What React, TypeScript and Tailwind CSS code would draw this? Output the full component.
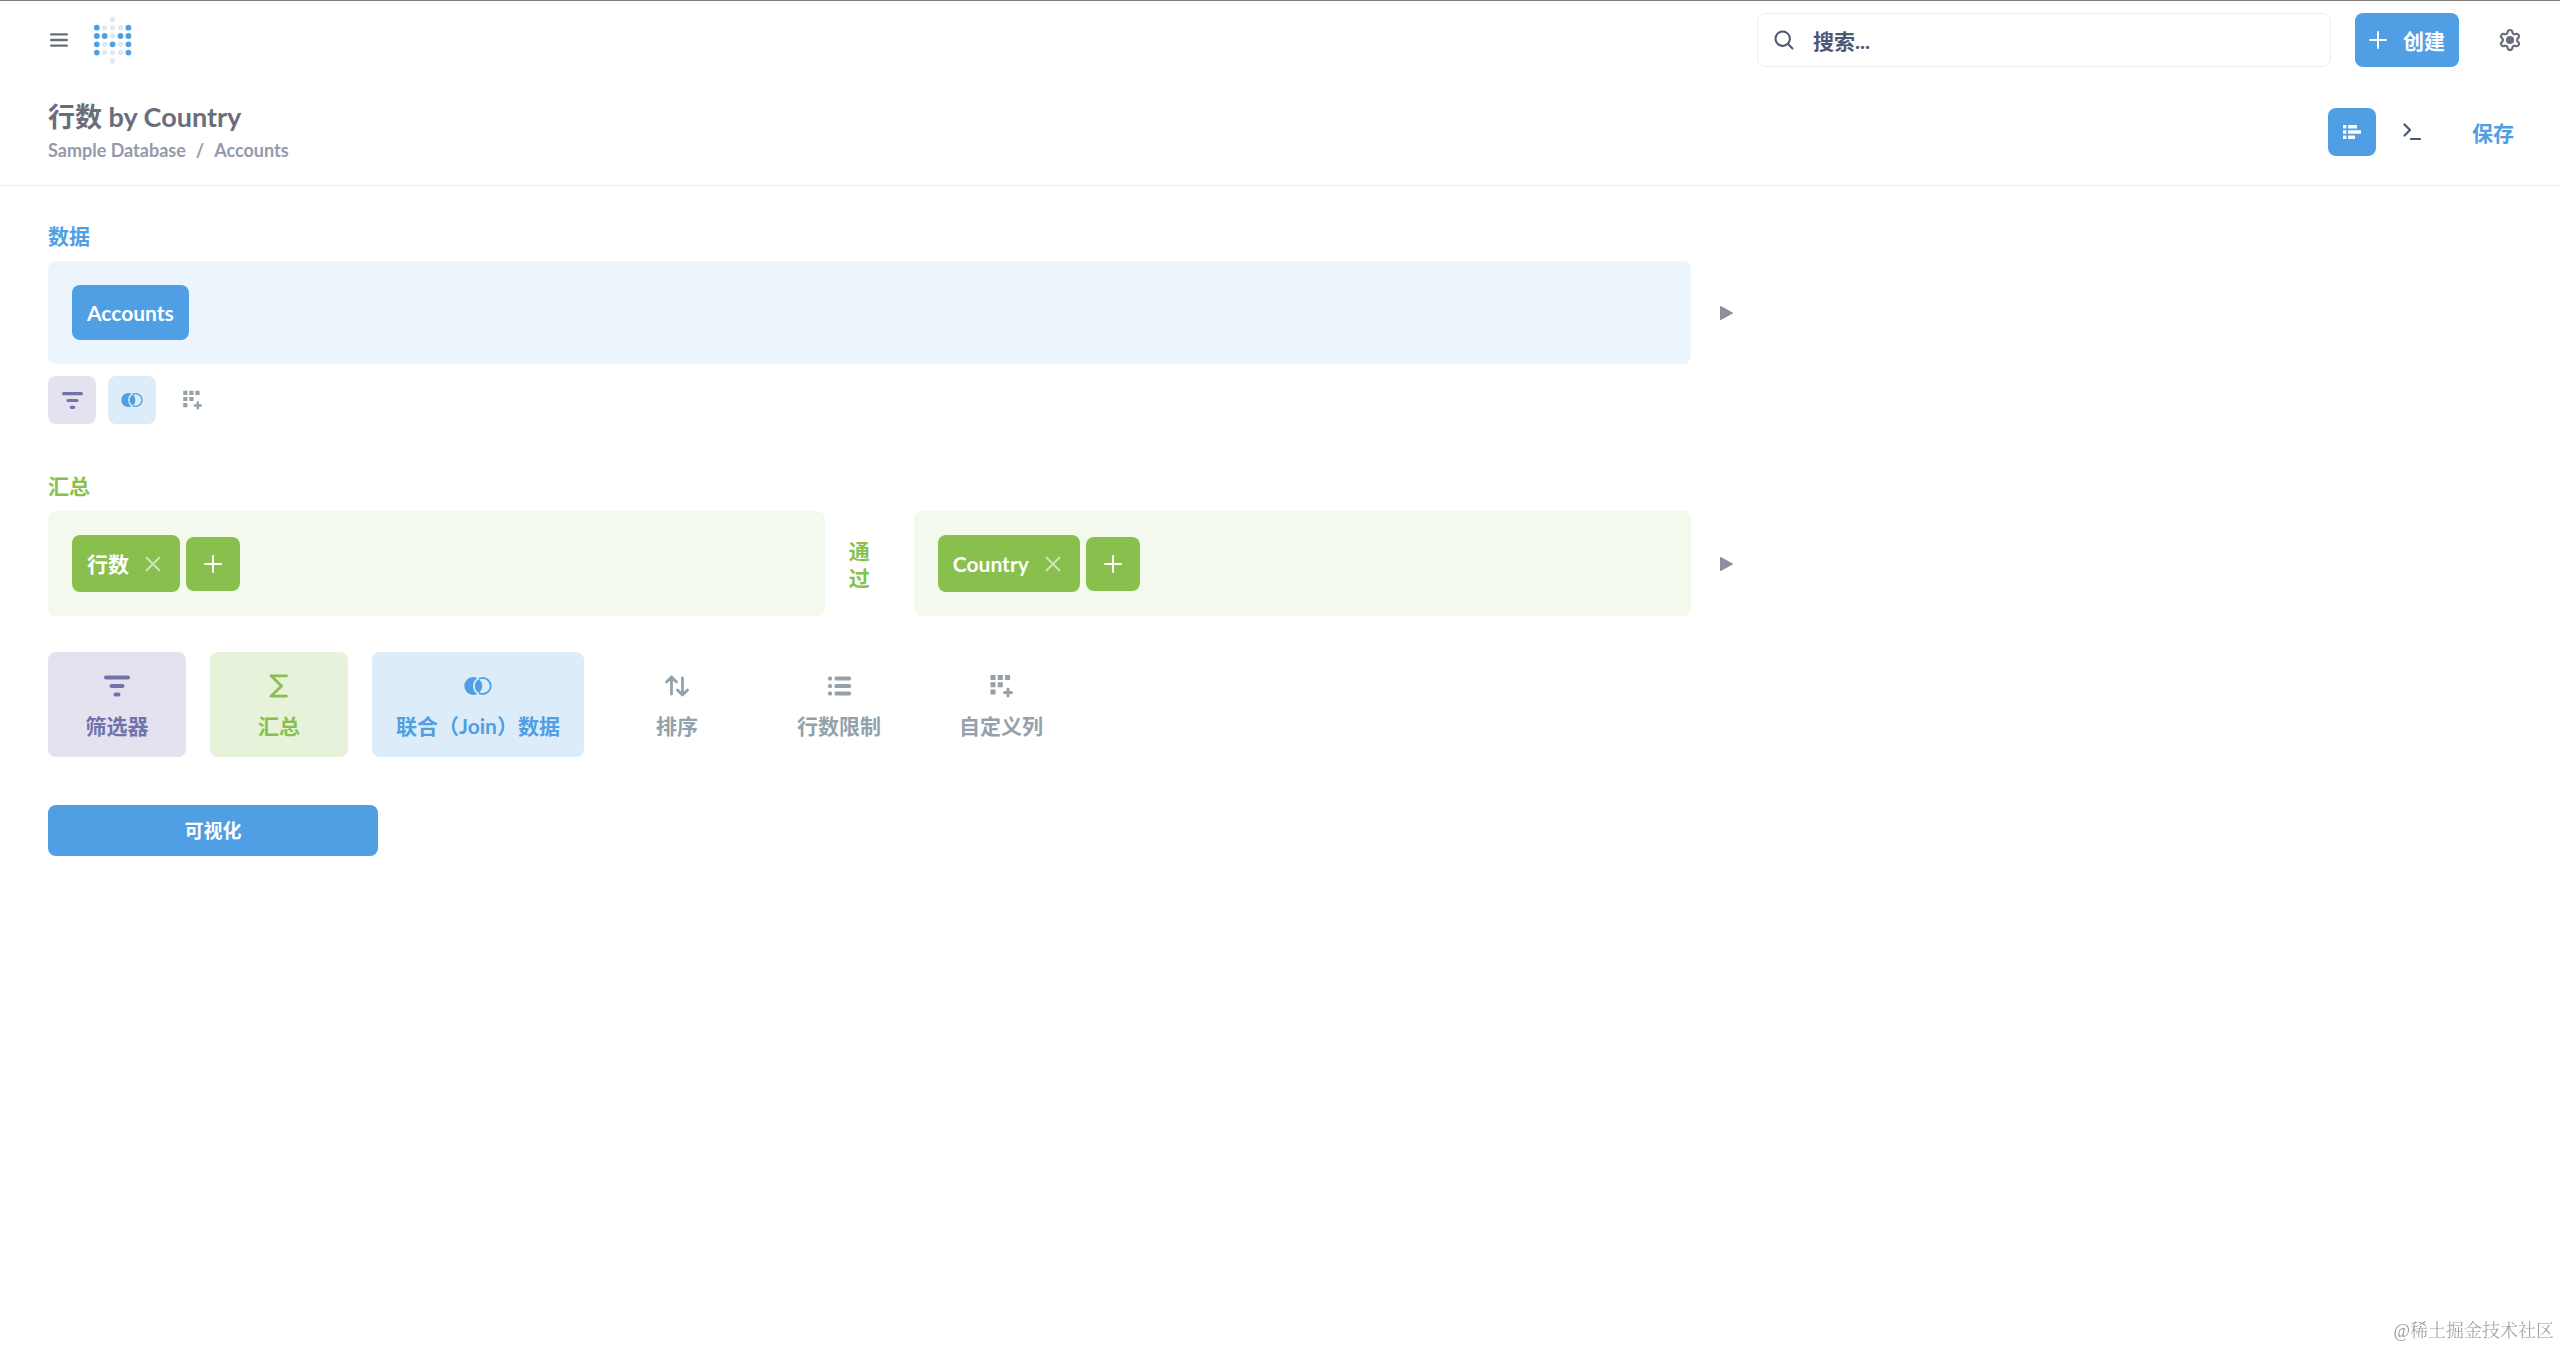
import React from 'react';
import { Settings } from 'lucide-react';

type IconProps = { className?: string };

const LOGO_ROWS = ['..o..', 'xooox', 'xxoxx', 'xoxox', 'xooox', '..o..'];

function Logo() {
  return (
    <svg viewBox="0 0 38 48" className="w-[38px] h-12" aria-hidden="true">
      {LOGO_ROWS.map((row, y) =>
        row.split('').map((dot, x) =>
          dot === '.' ? null : (
            <circle
              key={`${x}-${y}`}
              cx={2.8 + x * 7.9}
              cy={3.4 + y * 8.3}
              r={dot === 'x' ? 2.9 : 2.6}
              fill={dot === 'x' ? '#509ee3' : '#e1e7f3'}
            />
          )
        )
      )}
    </svg>
  );
}

function MenuIcon({ className }: IconProps) {
  return (
    <svg viewBox="0 0 20 16" className={className} stroke="currentColor" strokeWidth="2.4" strokeLinecap="round">
      <path d="M2.2 2.4h15.6M2.2 8h15.6M2.2 13.6h15.6" />
    </svg>
  );
}

function SearchIcon({ className }: IconProps) {
  return (
    <svg viewBox="0 0 20 20" className={className} fill="none" stroke="currentColor" strokeWidth="2" strokeLinecap="round">
      <circle cx="8.7" cy="8.7" r="7.2" />
      <path d="M14 14l4.5 4.5" />
    </svg>
  );
}

function PlusIcon({ className }: IconProps) {
  return (
    <svg viewBox="0 0 18 18" className={className} stroke="currentColor" strokeWidth="2" strokeLinecap="round">
      <path d="M9 1v16M1 9h16" />
    </svg>
  );
}

function CloseIcon({ className }: IconProps) {
  return (
    <svg viewBox="0 0 16 16" className={className} stroke="currentColor" strokeWidth="1.8" strokeLinecap="round">
      <path d="M1.5 1.5l13 13M14.5 1.5l-13 13" />
    </svg>
  );
}

function NotebookIcon({ className }: IconProps) {
  return (
    <svg viewBox="0 0 18 14" className={className} fill="currentColor">
      <rect x="0" y="0" width="3.4" height="3.4" rx=".6" />
      <rect x="5" y="0" width="9" height="3.4" rx=".6" />
      <rect x="0" y="5.2" width="3.4" height="3.6" rx=".6" />
      <rect x="5" y="5.2" width="13" height="3.6" rx=".6" />
      <rect x="0" y="10.6" width="3.4" height="3.4" rx=".6" />
      <rect x="5" y="10.6" width="7" height="3.4" rx=".6" />
    </svg>
  );
}

function TerminalIcon({ className }: IconProps) {
  return (
    <svg viewBox="0 0 18 18" className={className} fill="none" stroke="currentColor" strokeWidth="2.2" strokeLinecap="round" strokeLinejoin="round">
      <path d="M1.5 1.500l5.500 5.500-5.500 5.500M8 16h9" />
    </svg>
  );
}

function FilterIcon({ className }: IconProps) {
  return (
    <svg viewBox="0 0 26 26" className={className} stroke="currentColor" strokeWidth="4" strokeLinecap="round">
      <path d="M2 4.500h22M7.500 13h11M11.500 21.500h3" />
    </svg>
  );
}

// the gap between the two circles takes the button's own background
function JoinIcon({ className }: IconProps) {
  return (
    <svg viewBox="0 0 28 22" className={className} fill="none">
      <circle cx="18.6" cy="11" r="8.1" stroke="currentColor" strokeWidth="1.8" />
      <circle cx="9.3" cy="11" r="9" fill="currentColor" />
      <path d="M14.900 3.200A8.600 8.600 0 0 0 14.900 18.800" stroke="#dcecf9" strokeWidth="1.800" />
    </svg>
  );
}

function SumIcon({ className }: IconProps) {
  return (
    <svg viewBox="0 0 20 24" className={className} fill="none" stroke="currentColor" strokeWidth="2.8" strokeLinecap="round" strokeLinejoin="round">
      <path d="M17.500 1.800H2L12.500 12 2 22.200h15.500" />
    </svg>
  );
}

function SortIcon({ className }: IconProps) {
  return (
    <svg viewBox="0 0 24 22" className={className} fill="none" stroke="currentColor" strokeWidth="2.8" strokeLinecap="round" strokeLinejoin="round">
      <path d="M6.500 19V2M1.500 7l5-5 5 5M17.500 3v17M12.500 15l5 5 5-5" />
    </svg>
  );
}

function ListIcon({ className }: IconProps) {
  return (
    <svg viewBox="0 0 24 20" className={className} fill="currentColor">
      {[0.500, 8, 15.500].map((y) => (
        <React.Fragment key={y}>
          <rect x="1" y={y} width="4" height="4" rx="1.5" />
          <rect x="7.5" y={y} width="16.5" height="4" rx="1.5" />
        </React.Fragment>
      ))}
    </svg>
  );
}

function AddColumnIcon({ className }: IconProps) {
  return (
    <svg viewBox="-1.500 -1 24 24" className={className} fill="currentColor">
      <path d="M0 0h5v5H0zM7.300 0h5v5h-5zM14.600 0h5v5h-5zM0 7.300h5v5H0zM7.300 7.300h5v5h-5zM0 14.600h5v5H0z" />
      <path d="M17.500 14v7M14 17.500h7" stroke="currentColor" strokeWidth="3" strokeLinecap="round" />
    </svg>
  );
}

function PlayButton() {
  return (
    <button type="button" aria-label="预览" className="ml-[29px] text-[#8d8f9f]">
      <svg viewBox="0 0 13 14" className="w-[13px] h-3.5" fill="currentColor">
        <path d="M0 .6C0 .1.5-.1.9.1l11.700 6.300c.5.3.5.9 0 1.200L.9 13.900c-.4.2-.9 0-.9-.5z" />
      </svg>
    </button>
  );
}

function Chip({ label }: { label: string }) {
  return (
    <div className="h-[57px] pl-[15px] pr-[19px] flex items-center gap-4 rounded-lg bg-[#88bf4d] text-white">
      <span>{label}</span>
      <button type="button" aria-label={`移除 ${label}`} className="text-white/60">
        <CloseIcon className="w-4 h-4" />
      </button>
    </div>
  );
}

function AddButton() {
  return (
    <button type="button" aria-label="添加" className="w-[54px] h-[54px] flex items-center justify-center rounded-lg bg-[#88bf4d] text-white">
      <PlusIcon className="w-[18px] h-[18px]" />
    </button>
  );
}

const ACTIONS = [
  { label: '筛选器', icon: <FilterIcon className="w-[26px] h-[26px]" />, style: 'bg-[#e3e2ee] text-[#7172ad]' },
  { label: '汇总', icon: <SumIcon className="w-5 h-6" />, style: 'bg-[#e7f2db] text-[#88bf4d]' },
  { label: '联合（Join）数据', icon: <JoinIcon className="w-7 h-[22px]" />, style: 'bg-[#dcecf9] text-[#509ee3]' },
  { label: '排序', icon: <SortIcon className="w-6 h-[22px]" />, style: 'text-[#93a1ab]' },
  { label: '行数限制', icon: <ListIcon className="w-6 h-5" />, style: 'text-[#93a1ab]' },
  { label: '自定义列', icon: <AddColumnIcon className="w-6 h-6" />, style: 'text-[#93a1ab]' },
];

export default function App() {
  return (
    <div className="min-h-screen bg-white border-t border-[#808080] font-['Lato','Noto_Sans_CJK_SC',sans-serif] font-bold text-[21px] leading-[27px]">
      <header className="h-[78px] pl-12 pr-[38px] flex items-center">
        <button type="button" aria-label="菜单" className="w-[22px] flex justify-center text-[#696e7b]">
          <MenuIcon className="w-5 h-4" />
        </button>
        <a href="#home" aria-label="主页" className="ml-6">
          <Logo />
        </a>
        <label className="ml-auto w-[574px] h-[54px] px-4 flex items-center gap-[19px] border border-[#eeecec] rounded-lg text-[#4c5773]">
          <SearchIcon className="w-5 h-5" />
          <input
            type="text"
            aria-label="搜索"
            placeholder="搜索..."
            className="flex-1 min-w-0 bg-transparent outline-none placeholder:text-[#4c5773]"
          />
        </label>
        <button type="button" className="ml-6 w-[104px] h-[54px] flex items-center justify-center gap-4 rounded-lg bg-[#509ee3] text-white">
          <PlusIcon className="w-[18px] h-[18px]" />
          创建
        </button>
        <button type="button" aria-label="设置" className="ml-[39px] text-[#696e7b]">
          <Settings className="w-6 h-6" strokeWidth={2.2}>
            <circle cx="12" cy="12" r="2" fill="currentColor" />
          </Settings>
        </button>
      </header>

      <div className="h-[107px] pl-12 pr-[46px] flex items-center justify-between border-b border-[#eeecec]">
        <div>
          <h1 className="text-[27px] leading-[36px] text-[#696e7b]">行数 by Country</h1>
          <nav className="text-[18px] leading-[30px] text-[#949aab] flex gap-2.5">
            <a href="#database">Sample Database</a>
            <span>/</span>
            <a href="#accounts">Accounts</a>
          </nav>
        </div>
        <div className="flex items-center">
          <button type="button" aria-label="编辑器" className="w-12 h-12 flex items-center justify-center rounded-lg bg-[#509ee3] text-white">
            <NotebookIcon className="w-[18px] h-3.5" />
          </button>
          <button type="button" aria-label="查看 SQL" className="ml-3 w-12 h-12 flex items-center justify-center text-[#4c5773]">
            <TerminalIcon className="w-[18px] h-[18px]" />
          </button>
          <button type="button" className="ml-9 text-[#509ee3]">保存</button>
        </div>
      </div>

      <main className="px-12 pt-9">
        <section>
          <h2 className="text-[#509ee3]">数据</h2>
          <div className="mt-3 flex items-center">
            <div className="w-2/3 p-6 flex rounded-lg bg-[#edf5fc]">
              <button type="button" className="h-[55px] px-[15px] rounded-lg bg-[#509ee3] text-white">Accounts</button>
            </div>
            <PlayButton />
          </div>
          <div className="mt-3 flex gap-3">
            <button type="button" aria-label="筛选器" className="w-12 h-12 flex items-center justify-center rounded-lg bg-[#e3e2ee] text-[#7172ad]">
              <FilterIcon className="w-[21px] h-[21px]" />
            </button>
            <button type="button" aria-label="联合数据" className="w-12 h-12 flex items-center justify-center rounded-lg bg-[#dcecf9] text-[#509ee3]">
              <JoinIcon className="w-[22px] h-[18px]" />
            </button>
            <button type="button" aria-label="自定义列" className="w-12 h-12 flex items-center justify-center text-[#93a1ab]">
              <AddColumnIcon className="w-5 h-5" />
            </button>
          </div>
        </section>

        <section className="mt-12">
          <h2 className="text-[#88bf4d]">汇总</h2>
          <div className="mt-3 flex items-center">
            <div className="w-2/3 flex items-center">
              <div className="flex-1 p-6 flex items-center gap-1.5 rounded-lg bg-[#f3f9ed]">
                <Chip label="行数" />
                <AddButton />
              </div>
              <span className="w-[89px] pl-6 pr-11 text-[#88bf4d]">通过</span>
              <div className="flex-1 p-6 flex items-center gap-1.5 rounded-lg bg-[#f3f9ed]">
                <Chip label="Country" />
                <AddButton />
              </div>
            </div>
            <PlayButton />
          </div>
        </section>

        <div className="mt-9 flex flex-wrap gap-6">
          {ACTIONS.map((action) => (
            <button
              key={action.label}
              type="button"
              className={`h-[105px] min-w-[138px] px-6 pt-0.5 flex flex-col items-center justify-center gap-3 rounded-lg ${action.style}`}
            >
              <span className="h-7 flex items-center">{action.icon}</span>
              <span className="whitespace-nowrap">{action.label}</span>
            </button>
          ))}
        </div>

        <button type="button" className="mt-12 w-[330px] h-[51px] rounded-lg bg-[#509ee3] text-white text-[19px]">
          可视化
        </button>
      </main>

      <div className="fixed right-1.5 bottom-0.5 text-[18px] font-light text-[#9c9c9c] font-['Liberation_Serif','Noto_Serif_CJK_SC','Noto_Sans_CJK_SC',serif]">
        @稀土掘金技术社区
      </div>
    </div>
  );
}
